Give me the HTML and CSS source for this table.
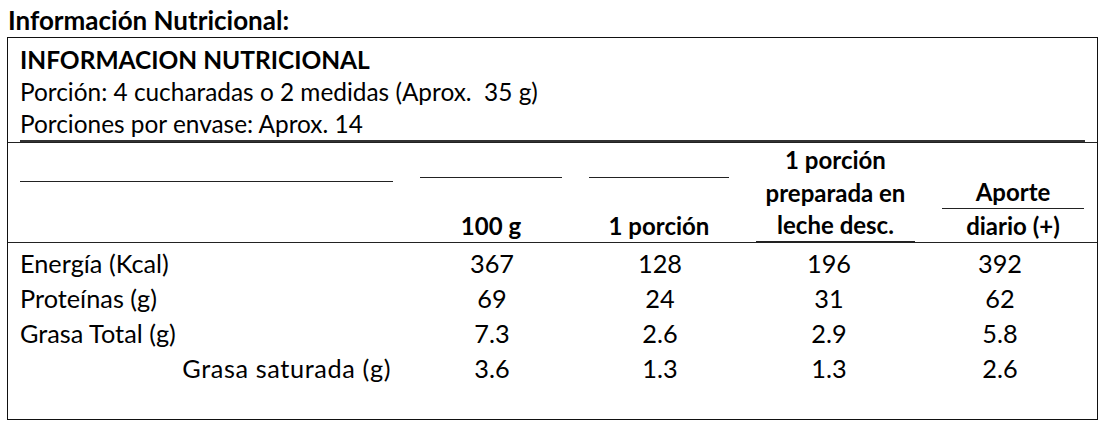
FILE: index.html
```html
<!DOCTYPE html>
<html lang="es">
<head>
<meta charset="utf-8">
<title>Información Nutricional</title>
<link rel="stylesheet" href="styles.css">
</head>
<body>
<h1 class="page-title">Información Nutricional:</h1>
<section class="label-box">
  <div class="intro">
    <h2 class="intro-title">INFORMACION NUTRICIONAL</h2>
    <p class="intro-line">Porción: 4 cucharadas o 2 medidas (Aprox.&nbsp; 35 g)</p>
    <p class="intro-line intro-last">Porciones por envase: Aprox. 14</p>
  </div>
  <div class="head">
    <div class="hcell hcell-label"><div class="rule-label"></div></div>
    <div class="hcell hcell-short"><div class="rule-short"></div><div class="hline">100 g</div></div>
    <div class="hcell hcell-short"><div class="rule-short"></div><div class="hline">1 porción</div></div>
    <div class="hcell hcell-milk"><div class="hline">1 porción</div><div class="hline">preparada en</div><div class="hline">leche desc.</div></div>
    <div class="hcell hcell-daily"><div class="hline hline-rule">Aporte</div><div class="hline">diario (+)</div></div>
  </div>
  <div class="rows">
    <div class="row"><span class="name">Energía (Kcal)</span><span class="val">367</span><span class="val">128</span><span class="val">196</span><span class="val">392</span></div>
    <div class="row"><span class="name">Proteínas (g)</span><span class="val">69</span><span class="val">24</span><span class="val">31</span><span class="val">62</span></div>
    <div class="row"><span class="name">Grasa Total (g)</span><span class="val">7.3</span><span class="val">2.6</span><span class="val">2.9</span><span class="val">5.8</span></div>
    <div class="row"><span class="name name-sub">Grasa saturada (g)</span><span class="val">3.6</span><span class="val">1.3</span><span class="val">1.3</span><span class="val">2.6</span></div>
  </div>
</section>
</body>
</html>
```
FILE: styles.css
```css
* { box-sizing: border-box; }
html, body { margin: 0; padding: 0; background: #fff; }
body {
  font-family: Lato, "Open Sans", "Liberation Sans", sans-serif;
  color: #000;
  font-size: 24px;
  width: 1110px;
  height: 442px;
}
.page-title {
  margin: 0;
  padding: 5px 0 0 8px;
  height: 37px;
  font-size: 26px;
  font-weight: 700;
  line-height: 30px;
}
.label-box {
  margin-left: 7px;
  width: 1091px;
  height: 383px;
  border: 1px solid #111;
}
.intro {
  padding: 5px 0 0 12px;
  height: 105px;
  border-bottom: 1px solid #222;
}
.intro-title {
  margin: 0;
  font-size: 24.5px;
  font-weight: 700;
  line-height: 33px;
}
.intro-line {
  margin: 0;
  font-size: 24.4px;
  line-height: 32px;
}
.intro-last {
  width: 1065px;
  height: 34px;
  border-bottom: 2px solid #333;
}
.head {
  display: grid;
  grid-template-columns: 373px 142px 140px 159px 142px;
  column-gap: 27px;
  padding-left: 12px;
  height: 100px;
  border-bottom: 1px solid #222;
  font-weight: 700;
}
.hcell {
  display: flex;
  flex-direction: column;
  justify-content: flex-end;
  text-align: center;
}
.hcell-label { justify-content: flex-start; }
.rule-label {
  height: 39px;
  border-bottom: 1px solid #222;
}
.hcell-short { justify-content: space-between; }
.rule-short {
  height: 35px;
  border-bottom: 1px solid #222;
}
.hline {
  line-height: 33px;
  height: 33px;
  white-space: nowrap;
}
.hcell-milk { border-bottom: 1px solid #222; }
.hcell-milk .hline:last-child { height: 32px; line-height: 32px; }
.hline-rule {
  height: 34px;
  border-bottom: 1px solid #222;
}
.rows {
  padding: 3px 0 0 12px;
  font-size: 25.3px;
}
.row {
  display: grid;
  grid-template-columns: 388px 168px 168px 170px 172px;
  height: 35px;
  line-height: 35px;
}
.name { white-space: nowrap; }
.name-sub {
  text-align: right;
  padding-right: 17px;
  letter-spacing: 0.6px;
}
.val { text-align: center; }
```
